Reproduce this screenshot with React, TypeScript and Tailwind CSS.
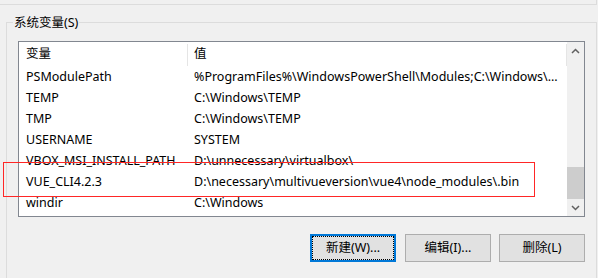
import React from 'react'

const rows: [string, string][] = [
    ['PSModulePath', '%ProgramFiles%\\WindowsPowerShell\\Modules;C:\\Windows\\...'],
    ['TEMP', 'C:\\Windows\\TEMP'],
    ['TMP', 'C:\\Windows\\TEMP'],
    ['USERNAME', 'SYSTEM'],
    ['VBOX_MSI_INSTALL_PATH', 'D:\\unnecessary\\virtualbox\\'],
    ['VUE_CLI4.2.3', 'D:\\necessary\\multivueversion\\vue4\\node_modules\\.bin'],
    ['windir', 'C:\\Windows'],
]

const Chevron = ({ down = false }: { down?: boolean }) => (
    <svg width="9" height="6" viewBox="0 0 9 6" className="block">
        <polyline
            points={down ? '1,1 4.5,4.5 8,1' : '1,5 4.5,1.5 8,5'}
            fill="none"
            stroke="#606060"
            strokeWidth="1.5"
        />
    </svg>
)

const App = () => {
    return (
        <div className="relative h-[278px] w-[598px] overflow-hidden bg-[#f0f0f0] text-[12.5px] text-black font-['Noto_Sans','Noto_Sans_CJK_SC',sans-serif]">
            {/* bottom edge of the user variables group */}
            <div className="h-[5px] w-[597px] border-b border-r border-[#dcdcdc]" />

            {/* system variables group */}
            <div className="relative ml-[6px] mt-[17px] h-[300px] w-[591px] border-l border-r border-t border-[#dcdcdc]">
                <span className="absolute -top-[9px] left-[6px] bg-[#f0f0f0] px-[1px] leading-[17px]">系统变量(S)</span>

                {/* list view */}
                <div className="ml-[11px] mt-[18px] flex h-[176px] w-[567px] border border-[#828790] bg-white">
                    <div className="flex-1">
                        <div className="flex h-[25px] items-center">
                            <div className="w-[168px] pl-[7px]">变量</div>
                            <div className="h-[22px] w-px bg-[#e5e5e5]" />
                            <div className="flex-1 pl-[6px]">值</div>
                            <div className="h-[22px] w-px bg-[#e5e5e5]" />
                        </div>
                        {rows.map(([name, value]) => (
                            <div key={name} className="flex h-[21px] items-center">
                                <div className="w-[169px] shrink-0 pl-[7px] whitespace-nowrap">{name}</div>
                                <div className="flex-1 overflow-hidden pl-[6px] whitespace-nowrap">{value}</div>
                            </div>
                        ))}
                    </div>

                    {/* scrollbar */}
                    <div className="flex w-[17px] flex-col bg-[#f0f0f0]">
                        <div className="flex h-[17px] items-center justify-center">
                            <Chevron />
                        </div>
                        <div className="flex flex-1 flex-col justify-end">
                            <div className="h-[32px] bg-[#cdcdcd]" />
                        </div>
                        <div className="flex h-[17px] items-center justify-center">
                            <Chevron down />
                        </div>
                    </div>
                </div>

                {/* buttons */}
                <div className="ml-[11px] mt-[17px] flex w-[567px] justify-end gap-[8px]">
                    <button className="relative mr-[1px] h-[28px] w-[86px] border-2 border-[#0078d7] bg-[#e1e1e1]">
                        <span className="absolute inset-0 border border-dotted border-black" />
                        新建(W)...
                    </button>
                    <button className="h-[28px] w-[86px] border border-[#adadad] bg-[#e1e1e1]">编辑(I)...</button>
                    <button className="h-[28px] w-[86px] border border-[#adadad] bg-[#e1e1e1]">删除(L)</button>
                </div>
            </div>

            {/* annotation box */}
            <div className="absolute left-[3px] top-[162px] h-[35px] w-[532px] border border-[#ff2626]" />
        </div>
    )
}

export default App
